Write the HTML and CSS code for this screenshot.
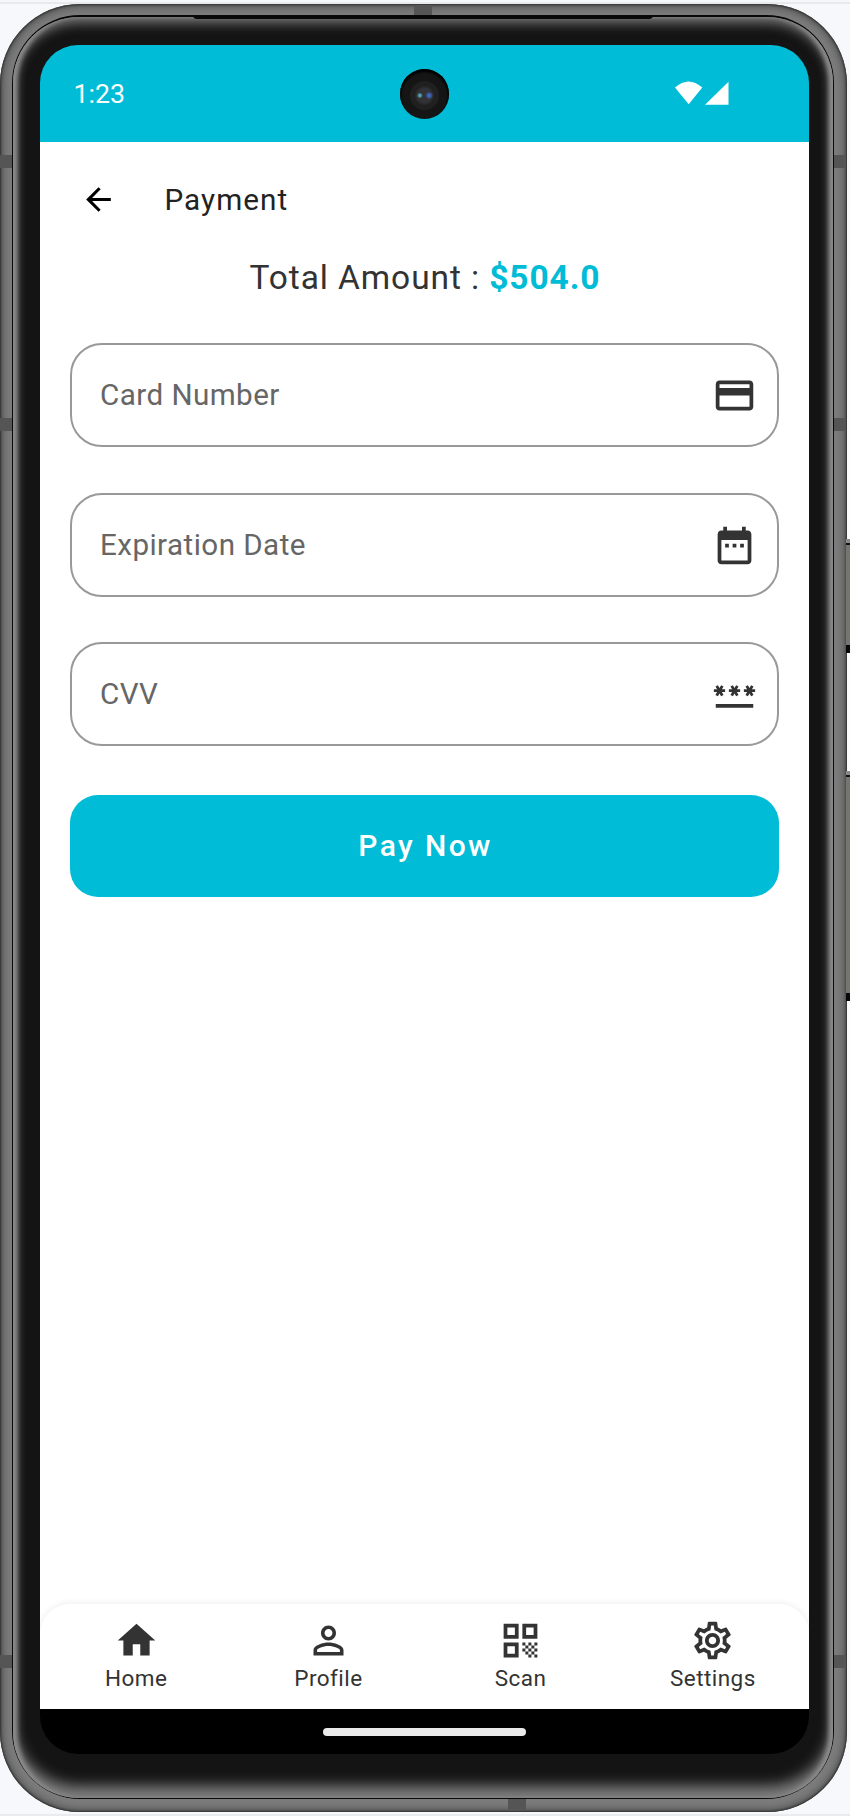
FILE: index.html
```html
<!DOCTYPE html>
<html lang="en">
<head>
<meta charset="utf-8">
<title>Payment</title>
<link rel="stylesheet" href="styles.css">
</head>
<body>
<div class="phone">
  <i class="band band-top"></i><i class="band band-bottom"></i>
  <i class="band band-l1"></i><i class="band band-l2"></i><i class="band band-l3"></i>
  <i class="band band-r1"></i><i class="band band-r2"></i><i class="band band-r3"></i>
  <i class="key key-power"></i><i class="key key-volume"></i>
  <div class="rim">
    <div class="bezel">
      <i class="speaker"></i>
      <div class="screen">
        <header class="status">
          <span class="time">1:23</span>
          <span class="camera"><i class="lens"></i></span>
          <svg class="signals" viewBox="0 0 54 24"><path d="M0 6.500Q13.500-5.500 27.300 6.500L13.700 23.300Z"/><path d="M30 23.700L53.500.700V23.700Z"/></svg>
        </header>
        <main class="content">
          <div class="appbar">
            <svg class="back" viewBox="0 0 24 24"><path d="M20 11H7.830l5.590-5.590L12 4l-8 8 8 8 1.410-1.410L7.830 13H20v-2z"/></svg>
            <h1 class="title">Payment</h1>
          </div>
          <p class="total">Total Amount : <b class="amount">$504.0</b></p>
          <form class="form">
            <div class="field"><span class="label">Card Number</span>
              <svg class="icon" viewBox="0 0 24 24"><path d="M20 4H4c-1.110 0-1.990.890-1.990 2L2 18c0 1.110.890 2 2 2h16c1.110 0 2-.890 2-2V6c0-1.110-.890-2-2-2zm0 14H4v-6h16v6zm0-10H4V6h16v2z"/></svg></div>
            <div class="field"><span class="label">Expiration Date</span>
              <svg class="icon" viewBox="0 0 24 24"><path d="M9 11H7v2h2v-2zm4 0h-2v2h2v-2zm4 0h-2v2h2v-2zm2-7h-1V2h-2v2H8V2H6v2H5c-1.110 0-1.990.900-1.990 2L3 20c0 1.100.890 2 2 2h14c1.100 0 2-.900 2-2V6c0-1.100-.900-2-2-2zm0 16H5V9h14v11z"/></svg></div>
            <div class="field"><span class="label">CVV</span>
              <svg class="icon" viewBox="0 0 24 24"><path d="M2 17h20v2H2v-2zm1.150-4.050L4 11.470l.850 1.480 1.300-.750-.850-1.480H7v-1.500H5.300l.850-1.470L4.850 7 4 8.470 3.150 7l-1.300.750.850 1.470H1v1.500h1.700l-.850 1.480 1.300.750zm6.700-.750l1.300.750.850-1.480.850 1.480 1.300-.750-.850-1.480H15v-1.500h-1.700l.850-1.470-1.300-.750L12 8.470 11.150 7l-1.300.750.850 1.470H9v1.500h1.700l-.850 1.480zM23 9.220h-1.700l.850-1.470-1.300-.750L20 8.470 19.150 7l-1.300.750.850 1.470H17v1.500h1.700l-.850 1.480 1.300.750.850-1.480.850 1.480 1.300-.750-.850-1.480H23v-1.500z"/></svg></div>
            <div class="pay">Pay Now</div>
          </form>
        </main>
        <div class="dock">
        <nav class="tabs">
          <a class="tab"><svg class="tab-icon" viewBox="0 0 24 24"><path d="M10 20v-6h4v6h5v-8h3L12 3 2 12h3v8z"/></svg>Home</a>
          <a class="tab"><svg class="tab-icon" viewBox="0 0 24 24"><path d="M12 5.900c1.160 0 2.100.940 2.100 2.100s-.940 2.100-2.100 2.100S9.900 9.160 9.900 8s.940-2.100 2.100-2.100m0 9c2.970 0 6.100 1.460 6.100 2.100v1.100H5.900V17c0-.640 3.130-2.100 6.100-2.100M12 4C9.790 4 8 5.790 8 8s1.790 4 4 4 4-1.790 4-4-1.790-4-4-4zm0 9c-2.670 0-8 1.340-8 4v3h16v-3c0-2.660-5.330-4-8-4z"/></svg>Profile</a>
          <a class="tab"><svg class="tab-icon" viewBox="0 0 24 24"><path d="M9 5v4H5V5h4M11 3H3v8h8V3zM9 15v4H5v-4h4M11 13H3v8h8v-8zM19 5v4h-4V5h4M21 3h-8v8h8V3zM13 13h1.600v1.600H13zM14.600 14.600h1.600v1.600h-1.600zM16.200 13h1.600v1.600h-1.600zM17.800 14.600h1.600v1.600h-1.600zM19.400 13H21v1.600h-1.600zM13 16.200h1.600v1.600H13zM16.200 16.200h1.600v1.600h-1.600zM19.400 16.200H21v1.600h-1.600zM14.600 17.800h1.600v1.600h-1.600zM17.800 17.800h1.600v1.600h-1.600zM16.200 19.400h1.600V21h-1.600zM19.400 19.400H21V21h-1.600z"/></svg>Scan</a>
          <a class="tab"><svg class="tab-icon" viewBox="0 0 24 24"><path d="M19.430 12.980c.040-.320.070-.640.070-.980s-.030-.660-.070-.980l2.110-1.650c.190-.150.240-.420.120-.640l-2-3.460c-.090-.160-.260-.250-.440-.250-.060 0-.120.010-.170.030l-2.490 1c-.520-.400-1.080-.730-1.690-.980l-.380-2.650C14.460 2.180 14.250 2 14 2h-4c-.250 0-.460.180-.490.420l-.380 2.650c-.610.250-1.170.590-1.690.980l-2.490-1c-.060-.020-.120-.030-.180-.030-.170 0-.340.090-.430.250l-2 3.460c-.130.220-.070.490.120.640l2.110 1.650c-.040.320-.070.650-.070.980s.030.660.070.980l-2.110 1.650c-.190.150-.240.420-.120.640l2 3.460c.090.160.260.250.440.250.060 0 .120-.010.170-.030l2.490-1c.520.400 1.080.730 1.690.980l.380 2.650c.030.240.240.420.490.420h4c.250 0 .460-.180.490-.420l.380-2.650c.610-.250 1.170-.590 1.690-.980l2.490 1c.060.020.120.030.180.030.170 0 .340-.090.430-.250l2-3.460c.120-.220.070-.490-.120-.640l-2.110-1.650zm-1.980-1.710c.040.310.050.520.050.730 0 .210-.020.430-.050.730l-.140 1.130.890.700 1.080.840-.700 1.210-1.270-.510-1.040-.420-.900.680c-.430.320-.840.560-1.250.730l-1.060.430-.160 1.130-.200 1.350h-1.400l-.190-1.350-.160-1.130-1.060-.430c-.430-.180-.830-.410-1.230-.710l-.910-.700-1.060.430-1.270.510-.700-1.210 1.080-.840.890-.700-.140-1.130c-.030-.310-.050-.540-.050-.740s.020-.430.050-.730l.140-1.130-.890-.700-1.080-.840.700-1.210 1.270.510 1.040.420.900-.680c.430-.320.840-.560 1.250-.730l1.060-.430.160-1.130.200-1.350h1.390l.190 1.350.160 1.130 1.060.430c.430.180.830.410 1.230.710l.910.700 1.060-.430 1.270-.510.700 1.210-1.070.850-.890.700.140 1.130zM12 8c-2.210 0-4 1.790-4 4s1.790 4 4 4 4-1.790 4-4-1.790-4-4-4zm0 6c-1.100 0-2-.900-2-2s.900-2 2-2 2 .900 2 2-.900 2-2 2z"/></svg>Settings</a>
        </nav>
        </div>
        <div class="gesture"><i class="pill"></i></div>
      </div>
    </div>
  </div>
</div>
</body>
</html>
```
FILE: styles.css
```css
* { box-sizing: border-box; }
body {
  margin: 0;
  height: 1816px;
  padding-top: 4px;
  overflow: hidden;
  background: linear-gradient(#f5f7fa 0 2px, #e8e9ec 2px 4px, #f7f8fb 4px 200px, #fdf9fa 350px 1000px, #f7f8fb 1500px 1814px, #eaebef 1814px);
  font-family: Roboto, sans-serif;
  color: #333;
}
h1, p { margin: 0; font-weight: 400; }

/* Metal frame */
.phone {
  position: relative;
  width: 847px;
  height: 1808px;
  padding: 11px 13px 13px 12px;
  border-radius: 80px;
  background: #7c7c7c;
  box-shadow: inset 0 0 2px 1px #303030, inset 0 0 8px 2px #484848;
}
.rim {
  height: 1784px;
  padding: 2px 1px 1px 1px;
  border-radius: 68px;
  background: #080808;
}
.bezel {
  position: relative;
  height: 1781px;
  padding: 28px 24px 43px 27px;
  border-radius: 66px;
  background: #141414;
  box-shadow: inset 5px 0 4px -1px #8c8c8c, inset -5px 0 4px -1px #8c8c8c, inset 0 6px 12px 0 #777, inset 0 -12px 14px 0 #808080;
}
.band { position: absolute; background: #555; }
.band-top { left: 414px; top: 1px; width: 18px; height: 10px; }
.band-bottom { left: 508px; bottom: 1px; width: 18px; height: 12px; }
.band-l1, .band-l2, .band-l3 { left: 0; width: 12px; height: 13px; }
.band-r1, .band-r2, .band-r3 { right: 1px; width: 12px; height: 13px; }
.band-l1, .band-r1 { top: 151px; }
.band-l2, .band-r2 { top: 414px; }
.band-l3, .band-r3 { top: 1651px; }
.key {
  position: absolute;
  left: 846px;
  width: 4px;
  background: #777570;
  border-top: 2px solid #111;
  border-bottom: 8px solid #080808;
  box-shadow: 0 -4px #888;
}
.key-power { top: 539px; height: 110px; }
.key-volume { top: 771px; height: 226px; }
.speaker {
  position: absolute;
  left: 180px;
  top: -2px;
  width: 460px;
  height: 4px;
  background: #080808;
  border-radius: 0 0 8px 8px;
}

/* Screen */
.screen {
  display: flex;
  flex-direction: column;
  width: 769px;
  height: 1709px;
  border-radius: 38px;
  overflow: hidden;
}
.status {
  display: grid;
  grid-template-columns: 1fr 50px 1fr;
  align-items: center;
  height: 97px;
  padding: 0 80px 0 33.500px;
  background: #00bcd6;
  color: #fff;
}
.time { font-size: 26.700px; padding-top: 1px; }
.camera {
  display: flex;
  align-items: center;
  justify-content: center;
  width: 49px;
  height: 50px;
  margin: 1px 0 0 23.500px;
  border-radius: 50%;
  background: #151515;
  box-shadow: inset 0 2px 2px 1px #000;
}
.lens {
  width: 29px;
  height: 29px;
  margin-top: 3px;
  border-radius: 50%;
  background: radial-gradient(circle at 34% 50%, #55a0b0 0 1px, transparent 3px), radial-gradient(circle at 66% 50%, #4068c0 0 1px, transparent 4px), radial-gradient(#303236 0 7px, #202020 10px);
}
.signals { justify-self: end; width: 54px; height: 24px; margin-top: -2px; fill: #fff; }
.content { flex: 1; padding: 0 30px; background: #fff; }
.appbar { display: flex; align-items: center; gap: 48px; height: 115px; padding: 0 0 0 9.500px; }
.back { width: 37px; height: 37px; fill: #000; }
.title { font-size: 29.700px; letter-spacing: 1.050px; color: #222; }
.total {
  height: 86px;
  padding: 1px 0 0 1px;
  font-size: 33.500px;
  line-height: 40px;
  letter-spacing: .9px;
  text-align: center;
}
.amount { font-weight: 700; color: #00bcd6; }
.form { display: flex; flex-direction: column; gap: 45.500px; }
.field {
  display: flex;
  align-items: center;
  justify-content: space-between;
  height: 104px;
  padding: 0 24px 0 28px;
  border: 2px solid #999;
  border-radius: 32px;
}
.label { font-size: 29.600px; letter-spacing: .45px; color: #666; }
.icon { width: 45px; height: 45px; margin: 1px -4px 0 0; fill: #333; }
.pay {
  height: 102px;
  margin-top: 3.500px;
  padding-left: 2px;
  border-radius: 28px;
  background: #00bcd6;
  color: #fff;
  font-size: 30px;
  font-weight: 500;
  line-height: 102px;
  letter-spacing: 2.400px;
  text-align: center;
}

/* Bottom navigation */
.dock { background: #fff; }
.tabs {
  display: grid;
  grid-template-columns: repeat(4, 1fr);
  height: 105px;
  padding-top: 14px;
  border-radius: 30px 30px 0 0;
  background: #fff;
  box-shadow: 0 -1px 7px rgba(0, 0, 0, .07);
}
.tab { display: flex; flex-direction: column; align-items: center; font-size: 22.500px; line-height: 26px; letter-spacing: .45px; }
.tab-icon { width: 45px; height: 45px; margin: 0 0 2px; fill: #333; }
.gesture { position: relative; display: flex; align-items: center; justify-content: center; height: 45px; background: #000; }
.pill { width: 203px; height: 8px; border-radius: 4px; background: #eaeaea; }
```
